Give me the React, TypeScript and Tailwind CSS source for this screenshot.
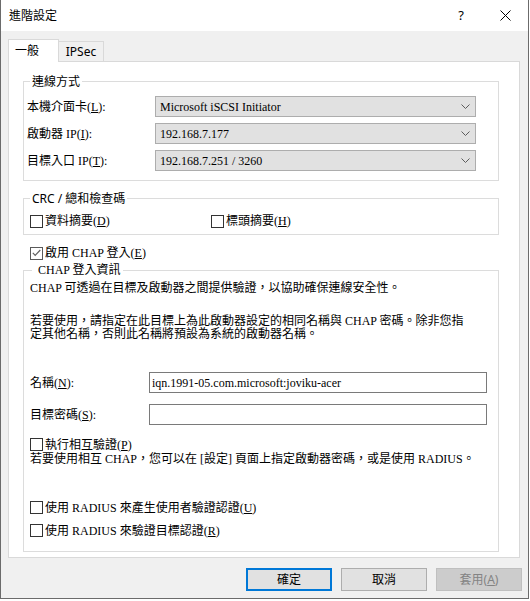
import React from "react";

function U({ c }: { c: string }) {
  return <span className="underline underline-offset-[1px] decoration-[1px]">{c}</span>;
}

function Box({ checked }: { checked?: boolean }) {
  return (
    <span
      className={
        checked
          ? "w-[13px] h-[13px] shrink-0 border border-[#5a5a5a] bg-white flex items-center justify-center"
          : "w-[13px] h-[13px] shrink-0 border border-[#333333] bg-white flex items-center justify-center"
      }
    >
      {checked && (
        <svg width="9" height="8" viewBox="0 0 9 8">
          <polyline points="0.8,3.8 3.2,6.3 8.3,1" fill="none" stroke="#606060" strokeWidth="1.2" />
        </svg>
      )}
    </span>
  );
}

function Combo({ label, value }: { label: React.ReactNode; value: string }) {
  return (
    <div className="flex items-center">
      <span className="w-[128px] whitespace-nowrap">{label}</span>
      <div className="w-[321px] h-[21px] bg-[#e1e1e1] border border-[#adadad] flex items-center justify-between pl-[4px] pr-[5px]">
        <span className="whitespace-nowrap">{value}</span>
        <svg width="9" height="5" viewBox="0 0 9 5">
          <polyline points="0.5,0.5 4.5,4.5 8.5,0.5" fill="none" stroke="#5c5c5c" strokeWidth="1" />
        </svg>
      </div>
    </div>
  );
}

export default function App() {
  return (
    <div className="w-[530px] h-[601px] bg-white">
      <div className="w-[529px] h-[599px] border-x border-b border-[#6b6b6b] flex flex-col text-black">
        {/* Title bar */}
        <div className="h-[31px] shrink-0 bg-white flex items-center pl-[8px] font-['Noto_Sans','Noto_Sans_CJK_TC',sans-serif] text-[12px]">
          <span>進階設定</span>
          <span className="ml-auto text-[13px] leading-none">?</span>
          <span className="ml-[36px] mr-[17px] flex items-center">
            <svg width="11" height="11" viewBox="0 0 11 11">
              <line x1="0.5" y1="0.5" x2="10.5" y2="10.5" stroke="#000" strokeWidth="1" />
              <line x1="10.5" y1="0.5" x2="0.5" y2="10.5" stroke="#000" strokeWidth="1" />
            </svg>
          </span>
        </div>

        {/* Body */}
        <div className="flex-1 bg-[#f0f0f0] flex flex-col px-[7px] pt-[8px]">
          {/* Tabs */}
          <div className="flex items-end h-[22px] font-['Noto_Sans','Noto_Sans_CJK_TC',sans-serif] text-[12px]">
            <div className="relative z-10 h-[23px] w-[51px] -mb-[1px] bg-white border border-b-0 border-[#d9d9d9] flex items-center pl-[6px]">
              一般
            </div>
            <div className="h-[20px] w-[45px] border border-l-0 border-b-0 border-[#d9d9d9] bg-[#f0f0f0] flex items-center justify-center">
              IPSec
            </div>
          </div>

          {/* Panel */}
          <div className="w-[512px] border border-[#d9d9d9] bg-white pl-[14px] pt-[11px] pb-[5px] font-['Liberation_Serif','Noto_Sans_CJK_TC',serif] text-[12px]">
            {/* Group 1 */}
            <fieldset className="w-[476px] border border-[#dcdcdc]">
              <legend className="ml-[6px] px-[2px] leading-[17px] h-[17px] font-['Noto_Sans','Noto_Sans_CJK_TC',sans-serif]">
                連線方式
              </legend>
              <div className="pl-[3px] pt-[6px] pb-[9px] flex flex-col gap-[6px]">
                <Combo label={<>本機介面卡(<U c="L" />):</>} value="Microsoft iSCSI Initiator" />
                <Combo label={<>啟動器 IP(<U c="I" />):</>} value="192.168.7.177" />
                <Combo label={<>目標入口 IP(<U c="T" />):</>} value="192.168.7.251 / 3260" />
              </div>
            </fieldset>

            {/* Group 2 */}
            <fieldset className="mt-[9px] w-[476px] border border-[#dcdcdc]">
              <legend className="ml-[6px] px-[2px] leading-[17px] h-[17px] font-['Noto_Sans','Noto_Sans_CJK_TC',sans-serif]">
                CRC / 總和檢查碼
              </legend>
              <div className="mt-[6px] mb-[5px] h-[16px] flex items-center pl-[6px]">
                <div className="w-[181px] flex items-center gap-[2px] whitespace-nowrap">
                  <Box />
                  <span>
                    資料摘要(<U c="D" />)
                  </span>
                </div>
                <div className="flex items-center gap-[2px] whitespace-nowrap">
                  <Box />
                  <span>
                    標頭摘要(<U c="H" />)
                  </span>
                </div>
              </div>
            </fieldset>

            {/* Enable CHAP */}
            <div className="mt-[10px] h-[16px] flex items-center gap-[2px] pl-[7px] whitespace-nowrap">
              <Box checked />
              <span>
                啟用 CHAP 登入(<U c="E" />)
              </span>
            </div>

            {/* Group 3 */}
            <fieldset className="mt-[1px] w-[476px] border border-[#dcdcdc]">
              <legend className="ml-[8px] pl-[6px] pr-[2px] leading-[17px] h-[17px]">CHAP 登入資訊</legend>
              <div className="pl-[6px] pb-[14px] flex flex-col">
                <p className="mt-[2px] leading-[14px] whitespace-nowrap">
                  CHAP 可透過在目標及啟動器之間提供驗證，以協助確保連線安全性。
                </p>
                <p className="mt-[20px] leading-[13px] whitespace-nowrap">
                  若要使用，請指定在此目標上為此啟動器設定的相同名稱與 CHAP 密碼。除非您指
                  <br />
                  定其他名稱，否則此名稱將預設為系統的啟動器名稱。
                </p>
                <div className="mt-[31px] flex items-center">
                  <span className="w-[119px] whitespace-nowrap">
                    名稱(<U c="N" />):
                  </span>
                  <div className="w-[338px] h-[21px] border border-[#7a7a7a] pl-[2px] flex items-center whitespace-nowrap">
                    iqn.1991-05.com.microsoft:joviku-acer
                  </div>
                </div>
                <div className="mt-[11px] flex items-center">
                  <span className="w-[119px] whitespace-nowrap">
                    目標密碼(<U c="S" />):
                  </span>
                  <div className="w-[338px] h-[21px] border border-[#7a7a7a]"></div>
                </div>
                <div className="mt-[13px] h-[13px] flex items-center gap-[2px] whitespace-nowrap">
                  <Box />
                  <span>
                    執行相互驗證(<U c="P" />)
                  </span>
                </div>
                <p className="mt-[2px] leading-[12px] whitespace-nowrap">
                  若要使用相互 CHAP，您可以在 [設定] 頁面上指定啟動器密碼，或是使用 RADIUS。
                </p>
                <div className="mt-[36px] h-[13px] flex items-center gap-[2px] whitespace-nowrap">
                  <Box />
                  <span>
                    使用 RADIUS 來產生使用者驗證認證(<U c="U" />)
                  </span>
                </div>
                <div className="mt-[10px] h-[13px] flex items-center gap-[2px] whitespace-nowrap">
                  <Box />
                  <span>
                    使用 RADIUS 來驗證目標認證(<U c="R" />)
                  </span>
                </div>
              </div>
            </fieldset>
          </div>

          {/* Buttons */}
          <div className="mt-[10px] -mr-[1px] flex justify-end gap-[9px] font-['Noto_Sans','Noto_Sans_CJK_TC',sans-serif] text-[12px]">
            <button className="w-[86px] h-[23px] bg-[#e1e1e1] border-2 border-[#0078d7] flex items-center justify-center">
              確定
            </button>
            <button className="w-[86px] h-[23px] bg-[#e1e1e1] border border-[#adadad] flex items-center justify-center">
              取消
            </button>
            <button className="w-[86px] h-[23px] bg-[#cccccc] border border-[#bfbfbf] text-[#838383] flex items-center justify-center">
              <span>
                套用(<U c="A" />)
              </span>
            </button>
          </div>
        </div>
      </div>
    </div>
  );
}
